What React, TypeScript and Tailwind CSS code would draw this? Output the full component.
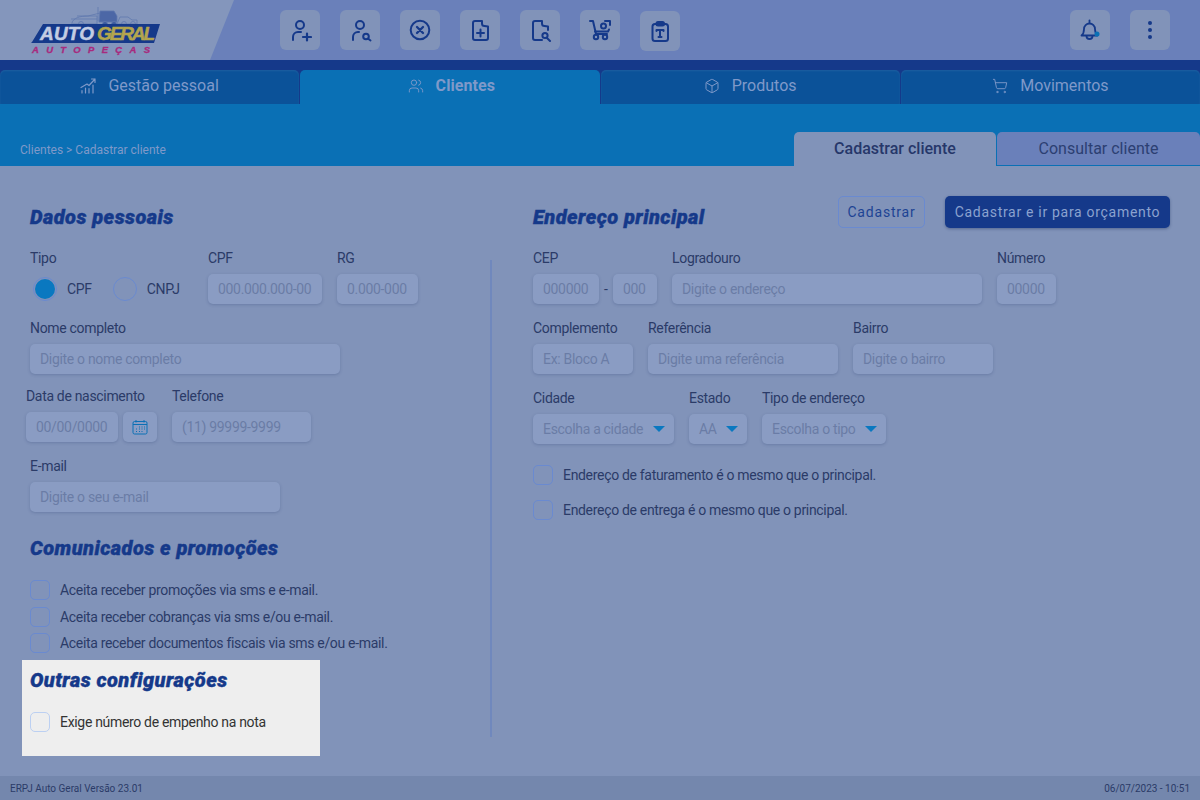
import React from "react";
import { Users, Box, ShoppingCart } from "lucide-react";

const Label = ({ children }: { children: React.ReactNode }) => (
  <div className="text-[14px] tracking-[-0.32px] leading-[17px] text-[#2b3b68] whitespace-nowrap">{children}</div>
);

const Field = ({ label, ph, w }: { label: string; ph: string; w: string }) => (
  <div className={`flex flex-col gap-[7px] ${w}`}>
    <Label>{label}</Label>
    <Input ph={ph} />
  </div>
);

const Input = ({ ph, cls = "" }: { ph: string; cls?: string }) => (
  <div className={`h-[30px] rounded-[5px] bg-[#8a9cc3] shadow-[0_1px_3px_rgba(40,60,110,0.25)] pl-[10px] flex items-center text-[14px] tracking-[-0.32px] text-[#6a7ca6] whitespace-nowrap ${cls}`}>
    {ph}
  </div>
);

const Select = ({ label, ph, w }: { label: string; ph: string; w: string }) => (
  <div className={`flex flex-col gap-[7px] ${w}`}>
    <Label>{label}</Label>
    <div className="h-[30px] rounded-[5px] bg-[#8a9cc3] shadow-[0_1px_3px_rgba(40,60,110,0.25)] pl-[10px] pr-[9px] flex items-center justify-between text-[14px] tracking-[-0.32px] text-[#6a7ca6] whitespace-nowrap">
      {ph}
      <span className="w-0 h-0 border-l-[6px] border-r-[6px] border-t-[6px] border-l-transparent border-r-transparent border-t-[#0a78c0]" />
    </div>
  </div>
);

const Check = ({ text, dark }: { text: string; dark?: boolean }) => (
  <div className="flex items-center gap-[10px]">
    <span className={`w-[20px] h-[20px] rounded-[5px] border ${dark ? "border-[#bcd0f2] bg-[#eeeeee]" : "border-[#6a8ad0] bg-[#8193b9]"}`} />
    <span className={`text-[14px] tracking-[-0.32px] leading-[16px] whitespace-nowrap ${dark ? "text-[#333333]" : "text-[#2b3b68]"}`}>{text}</span>
  </div>
);

const Heading = ({ children }: { children: React.ReactNode }) => (
  <h2 className="font-['Roboto'] italic font-black text-[20px] leading-[24px] text-[#15398a] whitespace-nowrap tracking-[0.45px] [-webkit-text-stroke:0.4px_#15398a]">{children}</h2>
);

const IconBtn = ({ children, cls = "mt-[10px]" }: { children: React.ReactNode; cls?: string }) => (
  <div className={`w-[40px] h-[40px] rounded-[6px] bg-[#8193b9] flex items-center justify-center ${cls}`}>
    <svg width="24" height="24" viewBox="0 0 24 24" fill="none" stroke="#15398a" strokeWidth="2" strokeLinecap="round" strokeLinejoin="round">
      {children}
    </svg>
  </div>
);

const Tab = ({ icon, text, active }: { icon: React.ReactNode; text: string; active?: boolean }) => (
  <div className={`h-[34px] pb-[2px] rounded-t-[5px] flex items-center justify-center gap-[12px] text-[16px] text-[#7f99c9] ${active ? "pl-[3px] bg-[#0a70b5] font-bold tracking-[0.1px]" : "bg-[#0b5299] shadow-[inset_0_1px_2px_rgba(255,255,255,0.08)]"}`}>
    {icon}
    <span>{text}</span>
  </div>
);

const Logo = () => (
  <svg width="140" height="50" viewBox="0 0 140 50" className="ml-[25px] mt-[6px]" role="img">
    <g fill="none" stroke="#6078ae" strokeWidth="0.8">
      <path d="M47 17c1-5 8-7 16-7l12-3" />
      <path d="M46 13h26M52 10h20v8H46" />
      <path d="M73 1v14M75 5h14l3 5v6H74z" fill="#4c67a6" />
      <path d="M95 11h8l4 3h5v4H92z" />
      <circle cx="56" cy="18" r="2.5" /><circle cx="80" cy="18" r="2.5" fill="#3c5a9e" /><circle cx="89" cy="18" r="2.5" fill="#3c5a9e" /><circle cx="99" cy="18" r="2.5" /><circle cx="108" cy="18" r="2.5" />
    </g>
    <polygon points="18,18 135,18 129,37 6,37 7,36" fill="#15398a" />
    <text x="15" y="34" fontFamily="Liberation Sans" fontStyle="italic" fontWeight="900" fontSize="19" fill="#c3cde3" stroke="#c3cde3" strokeWidth="0.5" textLength="54">AUTO</text>
    <text x="72" y="34" fontFamily="Liberation Sans" fontStyle="italic" fontWeight="900" fontSize="19" fill="#b3a54e" stroke="#b3a54e" strokeWidth="0.5" textLength="58">GERAL</text>
    <text x="7" y="47" fontFamily="Liberation Sans" fontStyle="italic" fontWeight="700" fontSize="9.5" fill="#a82a7e" stroke="#a82a7e" strokeWidth="0.3" textLength="118">AUTOPEÇAS</text>
  </svg>
);

export default function App() {
  return (
    <div className="w-[1200px] h-[800px] overflow-hidden flex flex-col bg-[#8193b9] font-['Roboto',sans-serif]">
      {/* Header */}
      <header className="h-[60px] flex bg-[#6a80ba] shrink-0">
        <div className="w-[234px] h-[60px] bg-[#8496bc] [clip-path:polygon(0_0,100%_0,210px_100%,0_100%)] shrink-0">
          <Logo />
        </div>
        <div className="ml-[46px] flex gap-[20px]">
          <IconBtn><circle cx="12" cy="7" r="4" /><path d="M5 22v-3a5 5 0 0 1 5-5h3" /><path d="M15 19h8M19 15.500v7" strokeWidth="2.200" /></IconBtn>
          <IconBtn><circle cx="12" cy="7" r="4" /><path d="M5 22v-3a5 5 0 0 1 5-5h1" /><circle cx="18" cy="18.500" r="2.800" /><path d="M20.500 21l2 1.500" /></IconBtn>
          <IconBtn><circle cx="12" cy="12" r="9.300" /><path d="M9 9l6 6M15 9l-6 6" strokeWidth="2.300" /></IconBtn>
          <IconBtn><path d="M14 3H7a2 2 0 0 0-2 2v15a2 2 0 0 0 2 2h11a2 2 0 0 0 2-2V8.500L16.500 8a2.500 2.500 0 0 1-2.500-2.500z" /><path d="M12.500 11.500v7M9 15h7" /></IconBtn>
          <IconBtn><path d="M14 22H7a2 2 0 0 1-2-2V5a2 2 0 0 1 2-2h7v2.500A2.500 2.500 0 0 0 16.500 8L20 8.500V12" /><circle cx="17" cy="17.500" r="2.600" /><path d="M19 20l3 3" /></IconBtn>
          <IconBtn><path d="M2 3h3l3 13h11" /><path d="M7 13.500h13l1-2" /><circle cx="8" cy="19" r="2.200" /><circle cx="17" cy="19" r="2.200" /><circle cx="15.500" cy="8" r="2.500" /><path d="M17 3h5v4" /></IconBtn>
          <IconBtn cls="mt-[11px]"><rect x="4.500" y="5" width="15.500" height="17" rx="2.500" /><rect x="8.500" y="3" width="7.500" height="3.500" rx="1.500" /><path d="M8.500 11h7M8.500 11v1M15.500 11v1M12 11v7M10.500 18h3" /></IconBtn>
        </div>
        <div className="ml-auto mr-[30px] flex gap-[20px]">
          <div className="w-[40px] h-[40px] mt-[10px] rounded-[6px] bg-[#8193b9] flex items-center justify-center">
            <svg width="24" height="24" viewBox="0 0 24 24" fill="none" stroke="#15398a" strokeWidth="1.800" strokeLinecap="round" strokeLinejoin="round">
              <path d="M3.500 17.500c2-1.500 2.500-3 2.500-6.500a5.500 5.500 0 0 1 11 0c0 3.500 .5 5 2.500 6.500z" />
              <path d="M11.500 5V2.500" />
              <path d="M8.500 18a3 3 0 0 0 6 0" />
              <circle cx="19" cy="16" r="2.500" fill="#0a70b5" stroke="none" />
            </svg>
          </div>
          <div className="w-[40px] h-[40px] mt-[10px] rounded-[6px] bg-[#8193b9] flex flex-col items-center justify-center gap-[2.500px]">
            <span className="w-[4.500px] h-[4.500px] rounded-full bg-[#15398a]" />
            <span className="w-[4.500px] h-[4.500px] rounded-full bg-[#15398a]" />
            <span className="w-[4.500px] h-[4.500px] rounded-full bg-[#15398a]" />
          </div>
        </div>
      </header>

      {/* Main tabs */}
      <nav className="h-[44px] pt-[10px] bg-[#15398a] grid grid-cols-4 gap-[1px] shrink-0">
        <Tab text="Gestão pessoal" icon={
          <svg width="16" height="16" viewBox="0 0 16 16" fill="none" stroke="#7f99c9" strokeWidth="1.200" strokeLinecap="round" strokeLinejoin="round">
            <path d="M1 9.500L7 6l2 1.500L15 1M11.500 1H15v3.500" /><path d="M2 15v-2.500M5.500 15v-5M9 15v-4.500M13 15V7" />
          </svg>} />
        <Tab active text="Clientes" icon={<Users size={16} strokeWidth={1.400} className="text-[#7f99c9]" />} />
        <Tab text="Produtos" icon={<Box size={16} strokeWidth={1.500} className="text-[#7f99c9]" />} />
        <Tab text="Movimentos" icon={<ShoppingCart size={16} strokeWidth={1.400} className="text-[#7f99c9]" />} />
      </nav>

      {/* Sub header */}
      <div className="h-[62px] bg-[#0a70b5] flex items-end justify-between shrink-0">
        <div className="ml-[20px] mb-[9px] text-[12px] leading-[14px] text-[#7f99c9]">Clientes &gt; Cadastrar cliente</div>
        <div className="flex gap-[1px]">
          <div className="w-[202px] h-[34px] rounded-t-[5px] bg-[#8193b9] flex items-center justify-center text-[16px] font-medium text-[#26376a]">Cadastrar cliente</div>
          <div className="w-[203px] h-[34px] rounded-t-[5px] bg-[#6a80ba] border-b border-[#0a70b5] flex items-center justify-center text-[16px] text-[#2c3f72]">Consultar cliente</div>
        </div>
      </div>

      {/* Content */}
      <main className="flex-1 flex min-h-0">
        {/* Left column */}
        <section className="w-[490px] shrink-0 pl-[30px] pt-[39px]">
          <Heading>Dados pessoais</Heading>
          <div className="flex mt-[21px]">
            <div className="w-[178px] flex flex-col gap-[7px]">
              <Label>Tipo</Label>
              <div className="h-[30px] flex items-center">
                <span className="ml-[3px] w-[24px] h-[24px] rounded-full border border-[#6a8ad0] flex items-center justify-center">
                  <span className="w-[20px] h-[20px] rounded-full bg-[#0a78c0]" />
                </span>
                <span className="ml-[10px] text-[14px] tracking-[-0.32px] text-[#2b3b68]">CPF</span>
                <span className="ml-[21px] w-[24px] h-[24px] rounded-full border border-[#6a8ad0]" />
                <span className="ml-[10px] text-[14px] tracking-[-0.32px] text-[#2b3b68]">CNPJ</span>
              </div>
            </div>
            <Field label="CPF" ph="000.000.000-00" w="w-[114px]" />
            <Field label="RG" ph="0.000-000" w="w-[81px] ml-[15px]" />
          </div>
          <Field label="Nome completo" ph="Digite o nome completo" w="w-[310px] mt-[16px]" />
          <div className="flex mt-[14px] -ml-[4px]">
            <div className="flex flex-col gap-[7px]">
              <Label>Data de nascimento</Label>
              <div className="flex gap-[5px]">
                <Input ph="00/00/0000" cls="w-[92px]" />
                <div className="w-[34px] h-[30px] rounded-[5px] bg-[#8a9cc3] shadow-[0_1px_3px_rgba(40,60,110,0.25)] flex items-center justify-center">
                  <svg width="16" height="16" viewBox="0 0 16 16" fill="none" stroke="#0a70b5" strokeWidth="1">
                    <rect x="1" y="2.500" width="14" height="12.500" rx="1.500" /><path d="M1 5.500h14M4 1v2.500M12 1v2.500" />
                    <path d="M7 8h1M9.500 8h1M12 8h1M4 10h1M7 10h1M9.500 10h1M12 10h1M4 12.500h1M7 12.500h1M9.500 12.500h1" strokeWidth="1.200" />
                  </svg>
                </div>
              </div>
            </div>
            <Field label="Telefone" ph="(11) 99999-9999" w="w-[139px] ml-[15px]" />
          </div>
          <Field label="E-mail" ph="Digite o seu e-mail" w="w-[250px] mt-[16px]" />
          <div className="mt-[24px]"><Heading>Comunicados e promoções</Heading></div>
          <div className="mt-[20px] flex flex-col gap-[6.500px]">
            <Check text="Aceita receber promoções via sms e e-mail." />
            <Check text="Aceita receber cobranças via sms e/ou e-mail." />
            <Check text="Aceita receber documentos fiscais via sms e/ou e-mail." />
          </div>
          <div className="mt-[7px] -ml-[8px] w-[298px] h-[96px] bg-[#eeeeee] pl-[8px] pt-[8px]">
            <Heading>Outras configurações</Heading>
            <div className="mt-[20px]"><Check dark text="Exige número de empenho na nota" /></div>
          </div>
        </section>

        {/* Divider */}
        <div className="w-[2px] h-[477px] mt-[94px] bg-[#7088bd] shrink-0" />

        {/* Right column */}
        <section className="flex-1 pl-[41px] pr-[30px] pt-[30px]">
          <div className="flex items-start h-[32px]">
            <div className="mt-[9px]"><Heading>Endereço principal</Heading></div>
            <div className="ml-auto flex gap-[20px]">
              <div className="w-[87px] h-[32px] rounded-[5px] border border-[#6a8ad0] flex items-center justify-center text-[14px] tracking-[0.8px] text-[#1d4394]">Cadastrar</div>
              <div className="w-[225px] h-[32px] rounded-[5px] bg-[#15398a] shadow-[0_1px_3px_rgba(20,40,90,0.4)] flex items-center justify-center text-[14px] tracking-[0.7px] text-[#8ba2cf]">Cadastrar e ir para orçamento</div>
            </div>
          </div>
          <div className="flex mt-[22px]">
            <div className="flex flex-col gap-[7px]">
              <Label>CEP</Label>
              <div className="flex items-center">
                <Input ph="000000" cls="w-[66px]" />
                <span className="w-[14px] text-center text-[14px] text-[#2b3b68]">-</span>
                <Input ph="000" cls="w-[44px]" />
              </div>
            </div>
            <Field label="Logradouro" ph="Digite o endereço" w="w-[310px] ml-[15px]" />
            <Field label="Número" ph="00000" w="w-[59px] ml-[15px]" />
          </div>
          <div className="flex gap-[15px] mt-[16px]">
            <Field label="Complemento" ph="Ex: Bloco A" w="w-[100px]" />
            <Field label="Referência" ph="Digite uma referência" w="w-[190px]" />
            <Field label="Bairro" ph="Digite o bairro" w="w-[140px]" />
          </div>
          <div className="flex gap-[15px] mt-[16px]">
            <Select label="Cidade" ph="Escolha a cidade" w="w-[141px]" />
            <Select label="Estado" ph="AA" w="w-[58px]" />
            <Select label="Tipo de endereço" ph="Escolha o tipo" w="w-[124px]" />
          </div>
          <div className="mt-[21px] flex flex-col gap-[15px]">
            <Check text="Endereço de faturamento é o mesmo que o principal." />
            <Check text="Endereço de entrega é o mesmo que o principal." />
          </div>
        </section>
      </main>

      {/* Footer */}
      <footer className="h-[24px] bg-[#7487ad] px-[10px] flex items-center justify-between text-[10px] text-[#2b3b68] shrink-0">
        <span>ERPJ Auto Geral Versão 23.01</span>
        <span>06/07/2023 - 10:51</span>
      </footer>
    </div>
  );
}
